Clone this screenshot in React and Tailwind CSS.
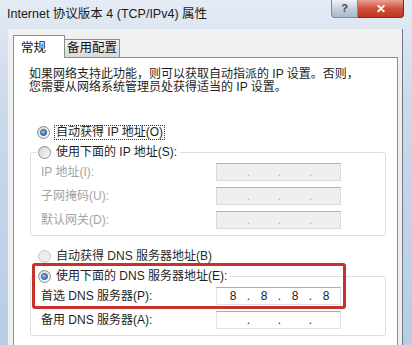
import React from "react";

function Radio({ checked = false, faded = false }) {
  return (
    <span
      className={`flex h-[13px] w-[13px] shrink-0 items-center justify-center rounded-full border ${
        faded
          ? "border-[#c8c8c8] bg-[#ededed]"
          : "border-[#8e8f8f] bg-[#e6e6e6] bg-[linear-gradient(135deg,#d4d4d4,#fbfbfb)]"
      }`}
    >
      {checked && (
        <span className="h-[7px] w-[7px] rounded-full border border-[#2b5d9c] bg-[#3f78c0] bg-[radial-gradient(circle_at_35%_35%,#a3c8f2,#1d5394)]" />
      )}
    </span>
  );
}

function IpBox({ value, disabled = false }) {
  const parts = value || ["", "", "", ""];
  return (
    <div
      className={`flex h-[18px] w-[125px] items-center border pl-[4px] text-[12px] leading-none ${
        disabled
          ? "border-[#dadada] border-t-[#b5b5b5] bg-[#efefef] text-[#b0b0b0]"
          : "border-[#e2e3ea] border-t-[#abadb3] bg-white text-[#222]"
      }`}
    >
      {parts.map((p, i) => (
        <React.Fragment key={i}>
          <span className="w-[24px] text-center">{p}</span>
          {i < 3 && <span className="w-[7px] text-center">.</span>}
        </React.Fragment>
      ))}
    </div>
  );
}

function Row({ label, disabled, value }) {
  return (
    <div className="flex h-[18px] items-center">
      <span className={`w-[185px] pl-[10px] ${disabled ? "text-[#a3a3a3]" : "text-[#1e1e1e]"}`}>
        {label}
      </span>
      <IpBox value={value} disabled={disabled} />
    </div>
  );
}

export default function App() {
  return (
    <div className="relative h-[345px] w-[412px] overflow-hidden bg-[#c6d6e8] bg-[linear-gradient(to_bottom,#e4ebf4,#cbd9ea_30%,#b7cde6)] font-[Liberation_Sans,Noto_Sans_CJK_SC,sans-serif]">
      {/* title bar */}
      <div className="flex h-[29px] items-center pl-[7px] text-[12.5px] text-[#1a1a1a]">
        Internet 协议版本 4 (TCP/IPv4) 属性
      </div>
      <div className="absolute right-[8px] top-0 z-20 flex">
        <div className="flex h-[18px] w-[27px] items-center justify-center rounded-bl-[4px] border border-t-0 border-[#7d8a9c] bg-[#c3cedb] bg-[linear-gradient(to_bottom,#eef2f7,#c7d1dd_50%,#aab8ca)] text-[11px] font-bold text-[#334866]">
          ?
        </div>
        <div className="flex h-[18px] w-[46px] items-center justify-center rounded-br-[4px] border border-l-0 border-t-0 border-[#7a2a22] bg-[#cc4a35] bg-[linear-gradient(to_bottom,#eaa495,#d0503b_50%,#bf361e)] text-[12px] font-bold text-white">
          ✕
        </div>
      </div>

      <div className="flex h-[316px]">
        <div className="w-[8px]" />
        {/* client area */}
        <div className="w-[395px] border-r border-[#6f7a88] bg-[#f0f0f0] pl-[5px] pt-[6px]">
          {/* tabs */}
          <div className="flex items-end text-[12.5px] text-[#111]">
            <div className="relative z-10 -mb-px flex h-[23px] w-[52px] items-start border border-b-0 border-[#898c95] bg-white pl-[7px] pt-[3px]">
              常规
            </div>
            <div className="flex h-[18px] w-[55px] items-center justify-center border border-l-0 border-b-0 border-[#898c95] bg-[#e2e2e2] bg-[linear-gradient(to_bottom,#f3f3f3,#d9d9d9)]">
              备用配置
            </div>
          </div>

          {/* panel */}
          <div className="relative h-[300px] w-[385px] border border-[#898c95] bg-white text-[12px] text-[#1e1e1e]">
            <p className="pl-[15px] pt-[10px] leading-[13px]">
              如果网络支持此功能，则可以获取自动指派的 IP 设置。否则，
              <br />
              您需要从网络系统管理员处获得适当的 IP 设置。
            </p>

            <div className="mt-[30px] flex h-[16px] items-center gap-[4px] pl-[23px]">
              <Radio checked />
              <span className="border border-dotted border-[#333] px-px leading-[13px]">自动获得 IP 地址(O)</span>
            </div>

            <fieldset className="ml-[16px] mt-[4px] w-[356px] rounded-[3px] border border-[#d5dfe5] pb-[6px]">
              <legend className="ml-[6px] flex h-[16px] items-center gap-[5px] px-[1px] pr-[3px]">
                <Radio />
                <span>使用下面的 IP 地址(S):</span>
              </legend>
              <div className="flex flex-col gap-[6px] pt-[3px]">
                <Row label="IP 地址(I):" disabled />
                <Row label="子网掩码(U):" disabled />
                <Row label="默认网关(D):" disabled />
              </div>
            </fieldset>

            <div className="mt-[12px] flex h-[16px] items-center gap-[5px] pl-[24px]">
              <Radio faded />
              <span className="text-[#2a2a2a]">自动获得 DNS 服务器地址(B)</span>
            </div>

            <fieldset className="ml-[16px] mt-[4px] w-[356px] rounded-[3px] border border-[#d5dfe5] pb-[6px]">
              <legend className="ml-[6px] flex h-[16px] items-center gap-[5px] px-[1px] pr-[3px]">
                <Radio checked />
                <span>使用下面的 DNS 服务器地址(E):</span>
              </legend>
              <div className="flex flex-col gap-[6px] pt-[3px]">
                <Row label="首选 DNS 服务器(P):" value={["8", "8", "8", "8"]} />
                <Row label="备用 DNS 服务器(A):" value={["", "", "", ""]} />
              </div>
            </fieldset>

            {/* highlight */}
            <div className="absolute left-[18px] top-[205px] h-[46px] w-[314px] rounded-[3px] border-[3px] border-[#c8302c]" />
          </div>
        </div>
      </div>
    </div>
  );
}
